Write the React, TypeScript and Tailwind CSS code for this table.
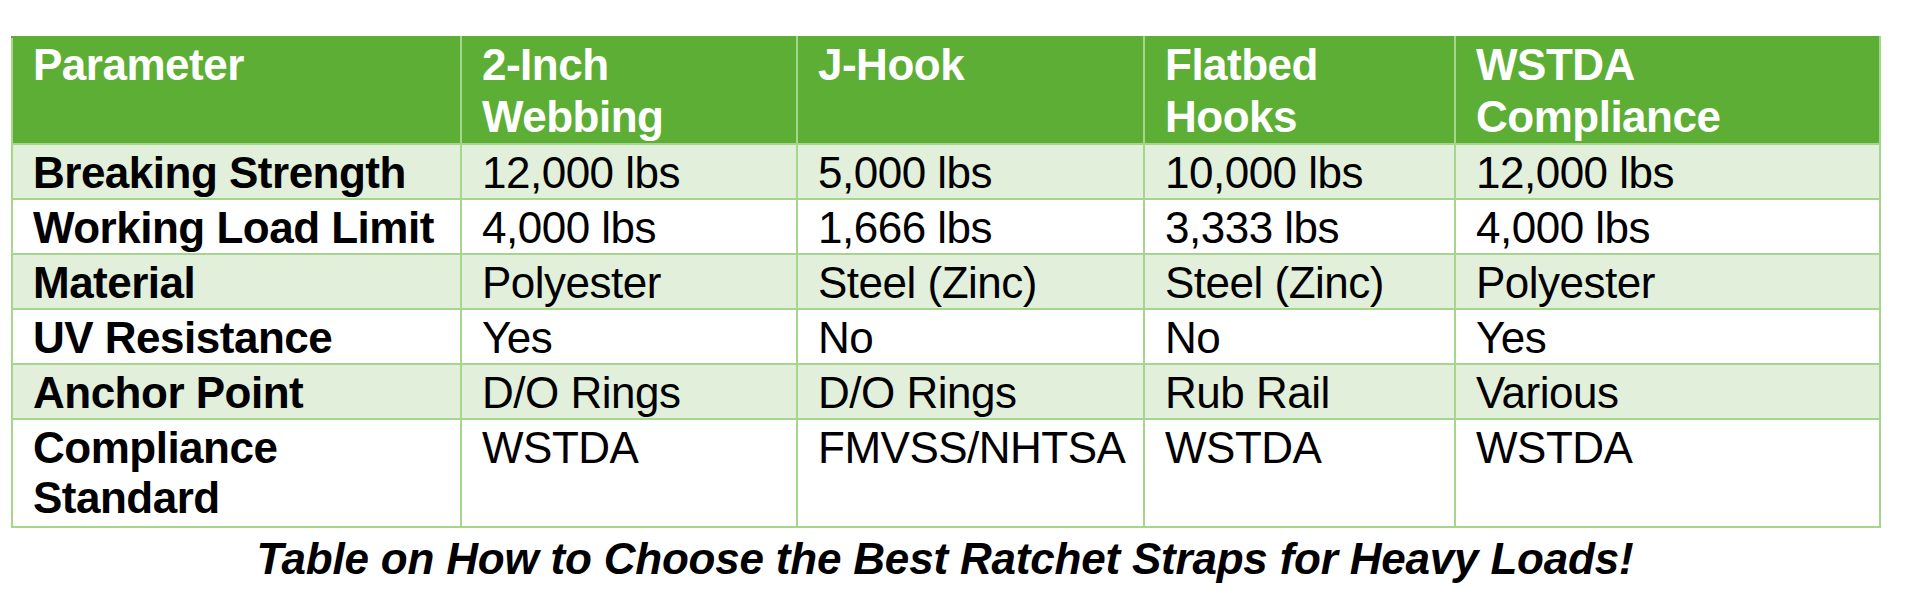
const headers = ['Parameter', '2-Inch Webbing', 'J-Hook', 'Flatbed Hooks', 'WSTDA Compliance'];

const rows: string[][] = [
  ['Breaking Strength', '12,000 lbs', '5,000 lbs', '10,000 lbs', '12,000 lbs'],
  ['Working Load Limit', '4,000 lbs', '1,666 lbs', '3,333 lbs', '4,000 lbs'],
  ['Material', 'Polyester', 'Steel (Zinc)', 'Steel (Zinc)', 'Polyester'],
  ['UV Resistance', 'Yes', 'No', 'No', 'Yes'],
  ['Anchor Point', 'D/O Rings', 'D/O Rings', 'Rub Rail', 'Various'],
  ['Compliance Standard', 'WSTDA', 'FMVSS/NHTSA', 'WSTDA', 'WSTDA'],
];

export default function App() {
  return (
    <div className="min-h-[600px] w-[1920px] bg-white font-['Liberation_Sans',Arial,Helvetica,sans-serif] text-black">
      <div className="w-[1868px] ml-[11px] pt-[36px]">
        <table className="w-full table-fixed border-collapse">
          <colgroup>
            <col className="w-[449px]" />
            <col className="w-[336px]" />
            <col className="w-[347px]" />
            <col className="w-[311px]" />
            <col className="w-[425px]" />
          </colgroup>
          <thead>
            <tr className="bg-[#5dae34]">
              {headers.map((h, i) => (
                <th
                  key={i}
                  className="border-2 border-[#a4d68e] border-t-[#5dae34] px-[20px] pt-[1px] pb-0 text-left align-top text-[44px] leading-[52px] font-bold text-white tracking-[-0.5px]"
                >
                  {h}
                </th>
              ))}
            </tr>
          </thead>
          <tbody>
            {rows.map((row, r) => (
              <tr key={r} className={r % 2 === 0 ? 'bg-[#e2efda]' : 'bg-white'}>
                {row.map((cell, c) => (
                  <td
                    key={c}
                    className={`border-2 border-[#a4d68e] px-[20px] pt-[3px] align-top text-[44px] leading-[50px] tracking-[-0.5px] ${
                      c === 0 ? 'font-bold' : 'font-normal'
                    } ${r === rows.length - 1 ? 'pb-[3px]' : 'pb-0'}`}
                  >
                    {cell}
                  </td>
                ))}
              </tr>
            ))}
          </tbody>
        </table>
        <p className="mt-[6px] text-center text-[44px] leading-[50px] font-bold italic tracking-[-0.2px]">
          Table on How to Choose the Best Ratchet Straps for Heavy Loads!
        </p>
      </div>
    </div>
  );
}
